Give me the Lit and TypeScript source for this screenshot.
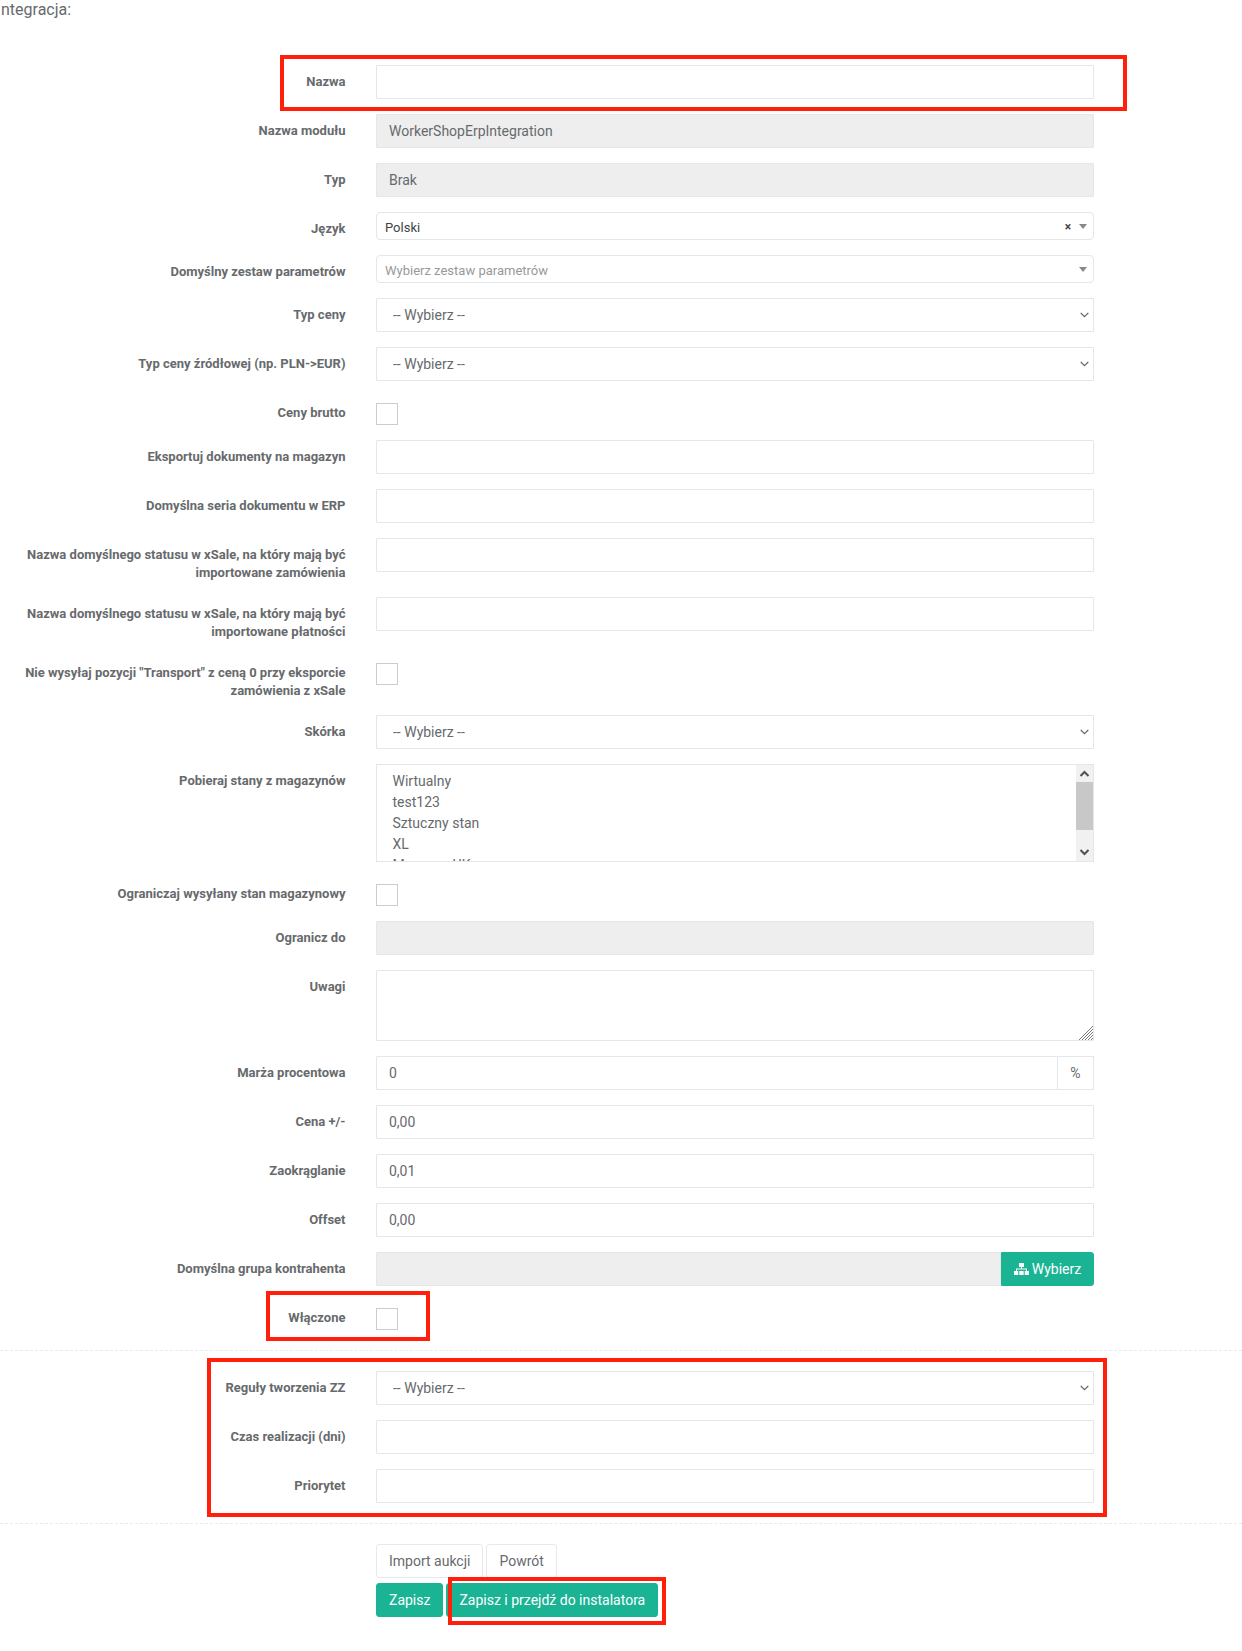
import { LitElement, html, css, nothing } from "lit";
import { customElement } from "lit/decorators.js";

type Row =
  | { k: "input"; label: string; value?: string; disabled?: boolean }
  | { k: "select"; label: string }
  | { k: "s2"; label: string; value?: string; placeholder?: string }
  | { k: "check"; label: string }
  | { k: "list"; label: string }
  | { k: "area"; label: string }
  | { k: "addon"; label: string; value: string }
  | { k: "pick"; label: string };

const first: Row[] = [
  { k: "input", label: "Nazwa" },
  { k: "input", label: "Nazwa modułu", value: "WorkerShopErpIntegration", disabled: true },
  { k: "input", label: "Typ", value: "Brak", disabled: true },
  { k: "s2", label: "Język", value: "Polski" },
  { k: "s2", label: "Domyślny zestaw parametrów", placeholder: "Wybierz zestaw parametrów" },
  { k: "select", label: "Typ ceny" },
  { k: "select", label: "Typ ceny źródłowej (np. PLN->EUR)" },
  { k: "check", label: "Ceny brutto" },
  { k: "input", label: "Eksportuj dokumenty na magazyn" },
  { k: "input", label: "Domyślna seria dokumentu w ERP" },
  { k: "input", label: "Nazwa domyślnego statusu w xSale, na który mają być importowane zamówienia" },
  { k: "input", label: "Nazwa domyślnego statusu w xSale, na który mają być importowane płatności" },
  { k: "check", label: 'Nie wysyłaj pozycji "Transport" z ceną 0 przy eksporcie zamówienia z xSale' },
  { k: "select", label: "Skórka" },
  { k: "list", label: "Pobieraj stany z magazynów" },
  { k: "check", label: "Ograniczaj wysyłany stan magazynowy" },
  { k: "input", label: "Ogranicz do", disabled: true },
  { k: "area", label: "Uwagi" },
  { k: "addon", label: "Marża procentowa", value: "0" },
  { k: "input", label: "Cena +/-", value: "0,00" },
  { k: "input", label: "Zaokrąglanie", value: "0,01" },
  { k: "input", label: "Offset", value: "0,00" },
  { k: "pick", label: "Domyślna grupa kontrahenta" },
  { k: "check", label: "Włączone" },
];

const second: Row[] = [
  { k: "select", label: "Reguły tworzenia ZZ" },
  { k: "input", label: "Czas realizacji (dni)" },
  { k: "input", label: "Priorytet" },
];

@customElement("app-root")
export class AppRoot extends LitElement {
  static styles = css`
    :host {
      display: block;
      position: relative;
      width: 1242px;
      height: 1651px;
      overflow: hidden;
      background: #fff;
      font-family: Roboto, "Open Sans", sans-serif;
      font-size: 14px;
      color: #676a6c;
    }
    .title {
      padding-left: 1px;
      font-size: 16px;
      line-height: 19px;
      height: 65px;
      box-sizing: border-box;
    }
    .row {
      display: grid;
      grid-template-columns: 345.5px 718px;
      column-gap: 30.5px;
      margin-bottom: 15px;
    }
    .label {
      text-align: right;
      font-weight: 700;
      font-size: 13px;
      line-height: 18px;
      padding-top: 8px;
      padding-left: 19px;
      color: #676a6c;
    }
    .control {
      box-sizing: border-box;
      display: block;
      width: 100%;
      height: 34px;
      margin: 0;
      padding: 6px 12px;
      border: 1px solid #e5e6e7;
      border-radius: 1px;
      background: #fff;
      font: 14px Roboto, sans-serif;
      color: #676a6c;
      outline: none;
    }
    .control:disabled {
      background: #eeeeee;
      opacity: 1;
    }
    .sel {
      position: relative;
    }
    select.control {
      appearance: none;
      padding: 6px 30px 6px 16px;
    }
    .sel svg {
      position: absolute;
      right: 5px;
      top: 14px;
      width: 9px;
      height: 6px;
      pointer-events: none;
    }
    .s2 {
      box-sizing: border-box;
      height: 28px;
      display: flex;
      align-items: center;
      padding: 0 6px 0 8px;
      border: 1px solid #e5e6e7;
      border-radius: 4px;
      font-size: 13px;
      color: #444;
    }
    .s2 .text {
      flex: 1;
      padding-top: 3px;
    }
    .s2 .ph {
      color: #999;
    }
    .s2 .clear {
      font-weight: 700;
      font-size: 12px;
      color: #444;
      margin-right: 8px;
      margin-top: 2px;
    }
    .s2 .caret {
      width: 0;
      height: 0;
      border-left: 4px solid transparent;
      border-right: 4px solid transparent;
      border-top: 5px solid #888;
    }
    .check {
      box-sizing: border-box;
      display: block;
      width: 22px;
      height: 22px;
      margin-top: 7px;
      border: 1px solid #ccc;
      background: #fff;
    }
    .list {
      box-sizing: border-box;
      display: flex;
      height: 98px;
      border: 1px solid #e5e6e7;
      overflow: hidden;
    }
    .items {
      flex: 1;
      padding: 6px 15.5px;
      height: 96px;
      overflow: hidden;
      line-height: 21px;
    }
    .bar {
      position: relative;
      width: 17px;
      background: #f1f1f1;
      flex: none;
    }
    .thumb {
      position: absolute;
      left: 0;
      right: 0;
      top: 17px;
      height: 48px;
      background: #c8c8c8;
    }
    .bar svg {
      position: absolute;
      left: 3px;
      width: 11px;
      height: 8px;
    }
    .bar svg.up {
      top: 5px;
    }
    .bar svg.down {
      bottom: 5px;
    }
    .area {
      position: relative;
    }
    textarea.control {
      height: 71px;
      resize: none;
    }
    .area svg {
      position: absolute;
      right: 1px;
      bottom: 1px;
      width: 15px;
      height: 15px;
    }
    .group {
      display: flex;
    }
    .group .control {
      flex: 1;
      min-width: 0;
    }
    .addon {
      box-sizing: border-box;
      width: 36px;
      height: 34px;
      border: 1px solid #e5e6e7;
      border-left: 0;
      display: flex;
      align-items: center;
      justify-content: center;
      font-size: 14px;
      flex: none;
    }
    .btn {
      box-sizing: border-box;
      display: inline-flex;
      align-items: center;
      justify-content: center;
      height: 34px;
      padding: 0 12px;
      border: 1px solid #e7eaec;
      border-radius: 3px;
      background: #fff;
      font: 14px Roboto, sans-serif;
      color: #676a6c;
      white-space: nowrap;
    }
    .btn.p {
      background: #1ab394;
      border-color: #1ab394;
      color: #fff;
    }
    .pick {
      width: 93px;
      flex: none;
      gap: 3px;
      padding: 0;
      border-radius: 0 3px 3px 0;
    }
    .pick svg {
      width: 15px;
      height: 12px;
      fill: #fff;
    }
    .dash {
      border: 0;
      border-top: 1px dashed #e7eaec;
      margin: 20px 0;
      height: 0;
    }
    .actions {
      margin-left: 376px;
      display: flex;
      flex-direction: column;
      gap: 5px;
    }
    .line {
      display: flex;
      gap: 3px;
    }
    .mark {
      position: absolute;
      box-sizing: border-box;
      border: 4px solid #ff1f0a;
      pointer-events: none;
    }
    .m1 {
      left: 280px;
      top: 55px;
      width: 847px;
      height: 56px;
    }
    .m2 {
      left: 266px;
      top: 1291px;
      width: 164px;
      height: 50px;
    }
    .m3 {
      left: 207px;
      top: 1358px;
      width: 900px;
      height: 159px;
    }
    .m4 {
      left: 448px;
      top: 1577px;
      width: 218px;
      height: 48px;
    }
  `;

  private control(r: Row) {
    switch (r.k) {
      case "input":
        return html`<input class="control" .value=${r.value ?? ""} ?disabled=${!!r.disabled} />`;
      case "select":
        return html`<div class="sel">
          <select class="control"><option>-- Wybierz --</option></select>
          <svg viewBox="0 0 9 6"><path d="M.7.9 4.500 4.700 8.300.9" fill="none" stroke="#666" stroke-width="1.300" /></svg>
        </div>`;
      case "s2":
        return html`<div class="s2">
          <span class="text ${r.placeholder ? "ph" : ""}">${r.value ?? r.placeholder}</span>
          ${r.value ? html`<span class="clear">×</span>` : nothing}
          <span class="caret"></span>
        </div>`;
      case "check":
        return html`<span class="check"></span>`;
      case "list":
        return html`<div class="list">
          <div class="items">
            <div>Wirtualny</div>
            <div>test123</div>
            <div>Sztuczny stan</div>
            <div>XL</div>
            <div>Magazyn UK</div>
          </div>
          <div class="bar">
            <svg class="up" viewBox="0 0 11 8"><path d="M1.500 6 5.500 2l4 4" fill="none" stroke="#505050" stroke-width="2" /></svg>
            <div class="thumb"></div>
            <svg class="down" viewBox="0 0 11 8"><path d="M1.500 2l4 4 4-4" fill="none" stroke="#505050" stroke-width="2" /></svg>
          </div>
        </div>`;
      case "area":
        return html`<div class="area">
          <textarea class="control"></textarea>
          <svg viewBox="0 0 15 15"><path d="M1 15 15 1M4 15 15 4M7 15 15 7M10 15l5-5M13 15l2-2" fill="none" stroke="#777" stroke-width="1" /></svg>
        </div>`;
      case "addon":
        return html`<div class="group">
          <input class="control" .value=${r.value} />
          <span class="addon">%</span>
        </div>`;
      case "pick":
        return html`<div class="group">
          <input class="control" disabled />
          <button class="btn p pick">
            <svg viewBox="0 0 15 12">
              <rect x="5" y="0" width="5" height="4" />
              <rect x="7" y="4" width="1" height="2" />
              <rect x="2" y="5.500" width="11" height="1" />
              <rect x="2" y="6" width="1" height="2" />
              <rect x="12" y="6" width="1" height="2" />
              <rect x="0" y="8" width="4.300" height="4" />
              <rect x="5.300" y="8" width="4.400" height="4" />
              <rect x="10.700" y="8" width="4.300" height="4" />
            </svg>
            Wybierz
          </button>
        </div>`;
    }
  }

  private row(r: Row) {
    return html`<div class="row">
      <div class="label">${r.label}</div>
      <div>${this.control(r)}</div>
    </div>`;
  }

  render() {
    return html`
      <div class="title">ntegracja:</div>
      ${first.map((r) => this.row(r))}
      <hr class="dash" />
      ${second.map((r) => this.row(r))}
      <hr class="dash" />
      <div class="actions">
        <div class="line">
          <button class="btn">Import aukcji</button>
          <button class="btn">Powrót</button>
        </div>
        <div class="line">
          <button class="btn p">Zapisz</button>
          <button class="btn p">Zapisz i przejdź do instalatora</button>
        </div>
      </div>
      <div class="mark m1"></div>
      <div class="mark m2"></div>
      <div class="mark m3"></div>
      <div class="mark m4"></div>
    `;
  }
}
